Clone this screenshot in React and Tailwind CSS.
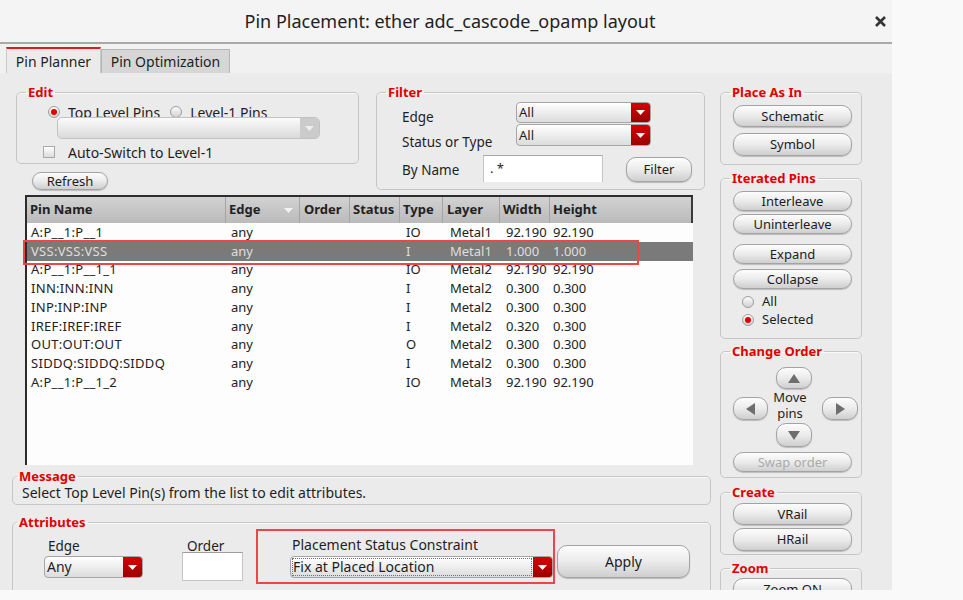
import React from 'react';

const rows = [
  ['A:P__1:P__1', 'any', 'IO', 'Metal1', '92.190', '92.190'],
  ['VSS:VSS:VSS', 'any', 'I', 'Metal1', '1.000', '1.000'],
  ['A:P__1:P__1_1', 'any', 'IO', 'Metal2', '92.190', '92.190'],
  ['INN:INN:INN', 'any', 'I', 'Metal2', '0.300', '0.300'],
  ['INP:INP:INP', 'any', 'I', 'Metal2', '0.300', '0.300'],
  ['IREF:IREF:IREF', 'any', 'I', 'Metal2', '0.320', '0.300'],
  ['OUT:OUT:OUT', 'any', 'O', 'Metal2', '0.300', '0.300'],
  ['SIDDQ:SIDDQ:SIDDQ', 'any', 'I', 'Metal2', '0.300', '0.300'],
  ['A:P__1:P__1_2', 'any', 'IO', 'Metal3', '92.190', '92.190'],
];

const Btn = ({ children, className = '', disabled }) => (
  <button
    className={`flex items-center justify-center rounded-[10px] border border-[#a3a3a3] bg-linear-to-b from-[#fdfdfd] via-[#ebebeb] to-[#cfcfcf] text-[13px] leading-none shadow-[0_1px_1px_rgba(0,0,0,0.2)] ${
      disabled ? 'text-[#ababab]' : 'text-[#1c1c1c]'
    } ${className}`}
  >
    {children}
  </button>
);

const Group = ({ title, className = '', legendClass = 'ml-[9px]', children }) => (
  <fieldset className={`rounded-[5px] border border-[#c6c6c6] shadow-[inset_0_1px_0_#fafafa] ${className}`}>
    <legend className={`px-[2px] text-[13px] font-bold leading-[16px] text-[#e00000] ${legendClass}`}>{title}</legend>
    {children}
  </fieldset>
);

const Radio = ({ on }) => (
  <span className="flex h-[12px] w-[12px] shrink-0 items-center justify-center rounded-full border border-[#9d9d9d] bg-linear-to-b from-[#fbfbfb] to-[#d2d2d2]">
    {on && <span className="h-[6px] w-[6px] rounded-full bg-[#e00000]" />}
  </span>
);

const Arrow = ({ color = 'white' }) => (
  <svg width="9" height="5" viewBox="0 0 9 5">
    <path d="M0 0h9L4.5 5z" fill={color} />
  </svg>
);

const RedSelect = ({ value, className = '', textClass = 'text-[13px]', focus }) => (
  <div className={`flex overflow-hidden rounded-[4px] border border-[#a5a5a5] bg-linear-to-b from-white to-[#dcdcdc] ${className}`}>
    <div className="flex flex-1 items-center p-[1px]">
      <div className={`flex h-full flex-1 items-center leading-none ${textClass} ${focus ? 'border border-dotted border-[#707070]' : 'pl-[1px]'}`}>
        {value}
      </div>
    </div>
    <div className="flex w-[19px] items-center justify-center bg-linear-to-b from-[#d80000] to-[#9a0000]">
      <Arrow />
    </div>
  </div>
);

const cols = 'grid grid-cols-[199px_74px_50px_50px_43px_57px_50px_1fr]';
const headPad = ['pl-[3px]', 'pl-[3px]', 'pl-[4px]', 'pl-[3px]', 'pl-[3px]', 'pl-[4px]', 'pl-[3px]', 'pl-[3px]'];

function PinTable() {
  const heads = ['Pin Name', 'Edge', 'Order', 'Status', 'Type', 'Layer', 'Width', 'Height'];
  return (
    <div className="relative ml-[13px] mt-[5px] h-[270px] w-[668px] border-l-2 border-t-2 border-[#2c2c2c] bg-[#fdfdfd]">
      <div className={`${cols} h-[26px] border-r-2 border-[#3a3a3a] bg-linear-to-b from-[#d2d2d2] to-[#bababa]`}>
        {heads.map((h, i) => (
          <div
            key={h}
            className={`flex items-center border-r border-[#a4a4a4] text-[13px] font-bold text-[#222] ${headPad[i]} ${i === 7 ? 'border-r-0' : ''}`}
          >
            <span className="flex-1">{h}</span>
            {i === 1 && (
              <span className="mr-[6px] flex">
                <Arrow color="#f2f2f2" />
              </span>
            )}
          </div>
        ))}
      </div>
      {rows.map((r, i) => {
        const sel = i === 1;
        return (
          <div
            key={i}
            className={`${cols} h-[18.75px] items-center text-[13px] leading-none ${sel ? 'bg-[#7a7a7a] text-[#dedede]' : 'text-[#222]'}`}
          >
            <div className="pl-[4px] tracking-[0.3px]">{r[0]}</div>
            <div className="pl-[5px]">{r[1]}</div>
            <div />
            <div />
            <div className="pl-[6px]">{r[2]}</div>
            <div className="pl-[7px]">{r[3]}</div>
            <div className="pl-[6px]">{r[4]}</div>
            <div className="pl-[3px]">{r[5]}</div>
          </div>
        );
      })}
      <div className="absolute left-[-4px] top-[43px] h-[25px] w-[616px] border-[2.5px] border-[#ee4646]" />
    </div>
  );
}

function LeftColumn() {
  return (
    <div className="ml-[12px] w-[699px]">
      <div className="flex">
        <div className="ml-[4px] w-[343px]">
          <Group title="Edit" className="h-[80px]">
            <div className="flex h-[16px] items-center pl-[31px] pt-[8px] text-[14px]">
              <Radio on />
              <span className="ml-[8px]">Top Level Pins</span>
              <span className="ml-[10px]">
                <Radio />
              </span>
              <span className="ml-[8px]">Level-1 Pins</span>
            </div>
            <div className="relative ml-[40px] mt-[1px] flex h-[22px] w-[263px] overflow-hidden rounded-[5px] border border-[#c2c2c2] bg-linear-to-b from-[#fbfbfb] to-[#dadada]">
              <div className="flex-1" />
              <div className="flex w-[19px] items-center justify-center bg-[#cbcbcb]">
                <Arrow color="#eeeeee" />
              </div>
            </div>
            <div className="ml-[26px] mt-[5px] flex h-[16px] items-center text-[14px]">
              <span className="h-[12px] w-[12px] border border-[#a9a9a9] bg-linear-to-b from-white to-[#dcdcdc]" />
              <span className="ml-[13px]">Auto-Switch to Level-1</span>
            </div>
          </Group>
          <Btn className="ml-[16px] mt-[8px] h-[18px] w-[76px]">Refresh</Btn>
        </div>
        <Group title="Filter" className="ml-[17px] h-[106px] w-[329px]">
          <div className="pl-[25px] pt-[2px] text-[13.5px]">
            <div className="flex h-[21px] items-start">
              <span className="mt-[7px] w-[114px] leading-[16px]">Edge</span>
              <RedSelect value="All" className="h-[21px] w-[135px]" />
            </div>
            <div className="mt-[1px] flex h-[22px] items-start">
              <span className="mt-[10px] w-[114px] leading-[16px]">Status or Type</span>
              <RedSelect value="All" className="h-[22px] w-[135px]" />
            </div>
            <div className="mt-[9px] flex items-start">
              <span className="mt-[7px] w-[81px] leading-[16px]">By Name</span>
              <div className="flex h-[27px] w-[120px] items-center border-x border-t border-[#c4c4c4] border-t-[#a8a8a8] bg-white pl-[6px] text-[13px]">
                . *
              </div>
              <Btn className="ml-[23px] mt-[2px] h-[25px] w-[66px]">Filter</Btn>
            </div>
          </div>
        </Group>
      </div>
      <PinTable />
      <Group title="Message" legendClass="ml-[4px]" className="mt-[3px] h-[37px]">
        <div className="pl-[9px] pt-[1px] text-[14px] leading-[16px]">Select Top Level Pin(s) from the list to edit attributes.</div>
      </Group>
      <Group title="Attributes" legendClass="ml-[4px]" className="mt-[9px] h-[90px]">
        <div className="flex items-start text-[13.5px]">
          <div className="ml-[31px] flex w-[99px] flex-col">
            <span className="mt-[8px] pl-[4px] leading-[16px]">Edge</span>
            <RedSelect value="Any" textClass="text-[14px]" className="mt-[2px] h-[22px] w-[99px]" />
          </div>
          <div className="ml-[39px] flex flex-col">
            <span className="mt-[8px] pl-[5px] leading-[16px]">Order</span>
            <div className="-mt-[2px] h-[29px] w-[61px] border border-[#c4c4c4] border-t-[#9e9e9e] bg-white" />
          </div>
          <div className="-mt-[1px] ml-[13px] h-[55px] w-[299px] border-2 border-[#ee4646] pl-[32px]">
            <div className="mt-[6px] pl-[2px] text-[14px] leading-[16px]">Placement Status Constraint</div>
            <RedSelect value="Fix at Placed Location" textClass="text-[14px]" focus className="mt-[3px] h-[22px] w-[263px]" />
          </div>
          <Btn className="ml-[2px] mt-[15px] h-[33px] w-[133px] text-[14px]">Apply</Btn>
        </div>
      </Group>
    </div>
  );
}

const ArrowBtn = ({ dir, className = '' }) => {
  const d = {
    up: 'M6 0L12 9H0z',
    down: 'M0 0h12L6 9z',
    left: 'M0 6L9 0v12z',
    right: 'M9 6L0 0v12z',
  }[dir];
  const vert = dir === 'up' || dir === 'down';
  return (
    <Btn className={className}>
      <svg width={vert ? 12 : 9} height={vert ? 9 : 12} viewBox={vert ? '0 0 12 9' : '0 0 9 12'}>
        <path d={d} fill="#6e6e6e" />
      </svg>
    </Btn>
  );
};

function RightColumn() {
  return (
    <div className="ml-[9px] w-[142px]">
      <Group title="Place As In" className="h-[81px]">
        <Btn className="ml-[12px] mt-[5px] h-[22px] w-[119px]">Schematic</Btn>
        <Btn className="ml-[12px] mt-[6px] h-[23px] w-[119px]">Symbol</Btn>
      </Group>
      <Group title="Iterated Pins" className="mt-[5px] h-[169px]">
        <Btn className="ml-[12px] mt-[5px] h-[20px] w-[119px]">Interleave</Btn>
        <Btn className="ml-[12px] mt-[3px] h-[20px] w-[119px]">Uninterleave</Btn>
        <Btn className="ml-[12px] mt-[10px] h-[20px] w-[119px]">Expand</Btn>
        <Btn className="ml-[12px] mt-[5px] h-[20px] w-[119px]">Collapse</Btn>
        <div className="ml-[21px] mt-[5px] flex h-[16px] items-center">
          <Radio />
          <span className="ml-[8px]">All</span>
        </div>
        <div className="ml-[21px] mt-[2px] flex h-[16px] items-center">
          <Radio on />
          <span className="ml-[8px]">Selected</span>
        </div>
      </Group>
      <Group title="Change Order" className="mt-[4px] h-[135px]">
        <ArrowBtn dir="up" className="ml-[55px] mt-[8px] h-[22px] w-[36px]" />
        <div className="flex h-[32px] items-start">
          <ArrowBtn dir="left" className="ml-[12px] mt-[8px] h-[23px] w-[35px]" />
          <div className="w-[44px] text-center leading-[16px]">
            Move
            <br />
            pins
          </div>
          <ArrowBtn dir="right" className="ml-[10px] mt-[8px] h-[23px] w-[36px]" />
        </div>
        <ArrowBtn dir="down" className="ml-[55px] mt-[2px] h-[24px] w-[36px]" />
        <Btn disabled className="ml-[12px] mt-[5px] h-[20px] w-[119px]">
          Swap order
        </Btn>
      </Group>
      <Group title="Create" className="mt-[6px] h-[71px]">
        <Btn className="ml-[12px] mt-[3px] h-[22px] w-[119px]">VRail</Btn>
        <Btn className="ml-[12px] mt-[3px] h-[23px] w-[119px]">HRail</Btn>
      </Group>
      <Group title="Zoom" className="mt-[5px] h-[60px]">
        <Btn className="ml-[12px] mt-[2px] h-[22px] w-[119px]">Zoom ON</Btn>
      </Group>
    </div>
  );
}

export default function App() {
  return (
    <div className="h-[600px] w-[963px] overflow-hidden bg-[#f9f9f9] font-['Noto_Sans',sans-serif] text-[13px] text-[#1e1e1e]">
      <div className="flex h-[590px] w-[892px] flex-col overflow-hidden bg-[#ebebeb]">
        <div className="grid h-[44px] shrink-0 grid-cols-[1fr_auto_1fr] items-center border-b-2 border-[#a9a9a9] bg-[#f4f4f4]">
          <div />
          <div className="pl-[8px] text-[18px] text-[#222]">Pin Placement: ether adc_cascode_opamp layout</div>
          <div className="mr-[6px] justify-self-end">
            <svg width="11" height="11" viewBox="0 0 11 11">
              <path d="M1 1l9 9M10 1l-9 9" stroke="#333" strokeWidth="2.6" />
            </svg>
          </div>
        </div>
        <div className="flex h-[29px] shrink-0 items-end bg-[#f1f1f1] pl-[6px]">
          <div className="flex h-[26px] w-[95px] items-center justify-center border-x border-t-2 border-[#c9c9c9] border-t-[#d91c1c] bg-[#ebebeb] text-[14px]">
            Pin Planner
          </div>
          <div className="flex h-[24px] w-[129px] items-center justify-center border border-b-0 border-[#b6b6b6] bg-[#d6d6d6] text-[14px]">
            Pin Optimization
          </div>
        </div>
        <div className="flex pt-[11px]">
          <LeftColumn />
          <RightColumn />
        </div>
      </div>
    </div>
  );
}
